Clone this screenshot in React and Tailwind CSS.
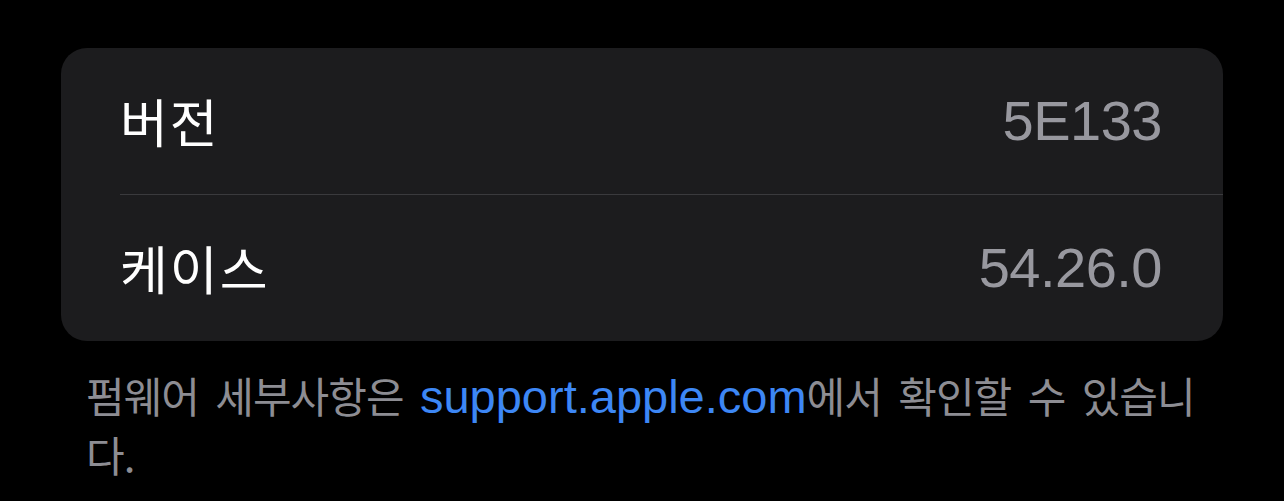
const ko = { fontFamily: '"Noto Sans CJK KR", sans-serif' };

function Row({ label, value, divider }) {
  return (
    <div className="flex flex-col">
      <div className="flex h-[146px] items-center justify-between pl-[59px] pr-[61px]">
        <span style={ko} className="text-[52px] tracking-[2px] text-white">
          {label}
        </span>
        <span className="text-[56px] tracking-[-0.5px] text-[#98989f]">
          {value}
        </span>
      </div>
      {divider && <div className="ml-[59px] h-px bg-[#3a3a3d]" />}
    </div>
  );
}

export default function App() {
  return (
    <div
      className="min-h-[501px] bg-black pt-[48px]"
      style={{ fontFamily: '"Liberation Sans", "Noto Sans CJK KR", sans-serif' }}
    >
      <div className="mx-[61px] overflow-hidden rounded-[26px] bg-[#1c1c1e]">
        <Row label="버전" value="5E133" divider />
        <Row label="케이스" value="54.26.0" />
      </div>

      <p className="mt-[26px] whitespace-pre pl-[86px] text-[42px] leading-[55px] text-[#8d8d93]">
        <span style={ko} className="tracking-[-1px] [word-spacing:8px]">펌웨어 세부사항은 </span>
        <span className="text-[47px] text-[#3d87f5]">support.apple.com</span>
        <span style={ko} className="tracking-[-1px] [word-spacing:8px]">에서 확인할 수 있습니</span>
        <br />
        <span style={ko} className="tracking-[-1px]">다.</span>
      </p>
    </div>
  );
}
